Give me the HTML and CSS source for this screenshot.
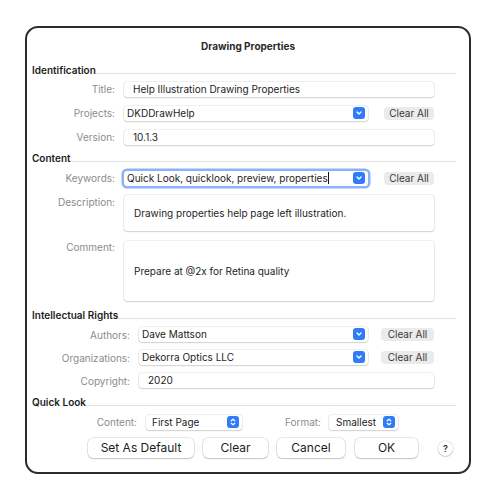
FILE: index.html
```html
<!DOCTYPE html>
<html lang="en">
<head>
  <meta charset="UTF-8">
  <title>Drawing Properties</title>
  <link rel="stylesheet" href="styles.css">
</head>
<body>
  <div class="window">
    <div class="title">Drawing Properties</div>

    <!-- Identification -->
    <div class="group group-ident">
      <div class="group-head"><span>Identification</span></div>
      <div class="row">
        <div class="label">Title:</div>
        <div class="field">Help Illustration Drawing Properties</div>
      </div>
      <div class="row">
        <div class="label">Projects:</div>
        <div class="popup">DKDDrawHelp
          <span class="chev"><svg width="12" height="12" viewBox="0 0 12 12"><path d="M4 5l2 2 2-2" fill="none" stroke="#fff" stroke-width="1.3" stroke-linecap="round" stroke-linejoin="round"/></svg></span>
        </div>
        <div class="clear-all">Clear All</div>
      </div>
      <div class="row">
        <div class="label">Version:</div>
        <div class="field">10.1.3</div>
      </div>
    </div>

    <!-- Content -->
    <div class="group group-content">
      <div class="group-head"><span>Content</span></div>
      <div class="row row-keywords">
        <div class="label">Keywords:</div>
        <div class="popup focused"><span class="caret">Quick Look, quicklook, preview, properties</span>
          <span class="chev"><svg width="12" height="12" viewBox="0 0 12 12"><path d="M4 5l2 2 2-2" fill="none" stroke="#fff" stroke-width="1.3" stroke-linecap="round" stroke-linejoin="round"/></svg></span>
        </div>
        <div class="clear-all">Clear All</div>
      </div>
      <div class="row row-text desc">
        <div class="label">Description:</div>
        <div class="textbox">Drawing properties help page left illustration.</div>
      </div>
      <div class="row row-text comment">
        <div class="label">Comment:</div>
        <div class="textbox">Prepare at @2x for Retina quality</div>
      </div>
    </div>

    <!-- Intellectual Rights -->
    <div class="group group-rights">
      <div class="group-head"><span>Intellectual Rights</span></div>
      <div class="row">
        <div class="label">Authors:</div>
        <div class="popup">Dave Mattson
          <span class="chev"><svg width="12" height="12" viewBox="0 0 12 12"><path d="M4 5l2 2 2-2" fill="none" stroke="#fff" stroke-width="1.3" stroke-linecap="round" stroke-linejoin="round"/></svg></span>
        </div>
        <div class="clear-all">Clear All</div>
      </div>
      <div class="row">
        <div class="label">Organizations:</div>
        <div class="popup">Dekorra Optics LLC
          <span class="chev"><svg width="12" height="12" viewBox="0 0 12 12"><path d="M4 5l2 2 2-2" fill="none" stroke="#fff" stroke-width="1.3" stroke-linecap="round" stroke-linejoin="round"/></svg></span>
        </div>
        <div class="clear-all">Clear All</div>
      </div>
      <div class="row">
        <div class="label">Copyright:</div>
        <div class="field">2020</div>
      </div>
    </div>

    <!-- Quick Look -->
    <div class="group group-quick">
      <div class="group-head"><span>Quick Look</span></div>
      <div class="row">
        <div class="label">Content:</div>
        <div class="popup small first">First Page
          <span class="chev"><svg width="12" height="12" viewBox="0 0 12 12"><path d="M4.2 4.8L6 3.2l1.8 1.6M4.2 7.2L6 8.8l1.8-1.6" fill="none" stroke="#fff" stroke-width="1.2" stroke-linecap="round" stroke-linejoin="round"/></svg></span>
        </div>
        <div class="label format">Format:</div>
        <div class="popup small last">Smallest
          <span class="chev"><svg width="12" height="12" viewBox="0 0 12 12"><path d="M4.2 4.8L6 3.2l1.8 1.6M4.2 7.2L6 8.8l1.8-1.6" fill="none" stroke="#fff" stroke-width="1.2" stroke-linecap="round" stroke-linejoin="round"/></svg></span>
        </div>
      </div>
    </div>

    <div class="buttons">
      <div class="btn btn-default">Set As Default</div>
      <div class="btn btn-clear">Clear</div>
      <div class="btn btn-cancel">Cancel</div>
      <div class="btn btn-ok">OK</div>
      <div class="help">?</div>
    </div>
  </div>
</body>
</html>
```

FILE: styles.css
```css
/* Page */
body {
  margin: 0;
  background: #fff;
  font-family: Inter, "Noto Sans", sans-serif;
  font-size: 10px;
  color: #1f1f1f;
}

/* Dialog window */
.window {
  box-sizing: border-box;
  width: 446px;
  height: 448px;
  margin: 26px 0 0 25px;
  border: 2px solid #2b2b2b;
  border-radius: 13px;
  padding: 0 13px 0 5px;
  background: #fff;
}

.title {
  height: 36px;
  line-height: 37px;
  text-align: center;
  font-weight: 700;
  color: #2a2a2a;
  padding-left: 8px;
}

/* Group headers with the rule after the text */
.group-head {
  display: flex;
  align-items: baseline;
  height: 13px;
  line-height: 13px;
  font-weight: 600;
  color: #1d1d1d;
}

.group-head::after {
  content: "";
  flex: 1;
  border-bottom: 1px solid #e2e2e2;
}

.group-ident .row:first-of-type {
  margin-top: 1px;
}

/* Form rows */
.row {
  display: flex;
  align-items: center;
  height: 24px;
  padding-right: 22px;
}

.label {
  width: 83px;
  margin-right: 9px;
  text-align: right;
  color: #8b8b8b;
  flex-shrink: 0;
}

.field,
.popup,
.textbox {
  box-sizing: border-box;
  background: #fff;
  border-radius: 3px;
  box-shadow: 0 0 0 0.5px rgba(0, 0, 0, 0.13), 0 1px 1.5px rgba(0, 0, 0, 0.13);
  color: #1d1d1d;
}

.field {
  flex: 1;
  height: 15px;
  line-height: 15px;
  padding-left: 9px;
}

.popup {
  position: relative;
  width: 244px;
  height: 15px;
  line-height: 15px;
  padding-left: 3px;
}

.chev {
  position: absolute;
  right: 3px;
  top: 1px;
  width: 12px;
  height: 12px;
  border-radius: 3px;
  background: #2f7cf6;
  display: flex;
}

.clear-all {
  box-sizing: border-box;
  width: 50px;
  height: 13px;
  line-height: 13px;
  margin-left: 16px;
  border-radius: 4px;
  background: #ebebeb;
  text-align: center;
  color: #3a3a3a;
}

/* Content group */
.group-content .group-head {
  margin-top: 3px;
}

.row-keywords {
  height: 26px;
}

.popup.focused {
  box-shadow: 0 0 0 2.5px #8bb1f8, 0 0 0 0.5px rgba(0, 0, 0, 0.2);
}

.caret {
  border-right: 1px solid #111;
}

.row-text {
  align-items: flex-start;
  height: auto;
}

.row-text .label {
  line-height: 12px;
}

.textbox {
  flex: 1;
  display: flex;
  align-items: center;
  padding-left: 10px;
}

.desc {
  margin-top: 4px;
}

.desc .textbox {
  height: 36px;
}

.desc .label {
  padding-top: 1px;
}

.comment {
  margin-top: 10px;
}

.comment .textbox {
  height: 60px;
}

/* Intellectual rights group */
.group-rights .group-head {
  margin-top: 8px;
}

.group-rights .row {
  height: 23px;
}

.group-rights .row:nth-child(2) {
  margin-top: 1px;
}

.group-rights .label {
  width: 98px;
}

.group-rights .popup {
  width: 229px;
}

.group-rights .clear-all {
  width: 53px;
  margin-left: 13px;
}

/* Quick look group */
.group-quick .group-head {
  margin-top: 4px;
}

.group-quick .row {
  height: 26px;
}

.group-quick .label {
  width: 105px;
}

.popup.small {
  padding-left: 6px;
}

.popup.first {
  width: 96px;
}

.popup.last {
  width: 69px;
  padding-left: 7px;
}

.label.format {
  width: 79px;
  margin-right: 8px;
}

/* Bottom buttons */
.buttons {
  display: flex;
  align-items: center;
  gap: 9px;
  height: 22px;
  margin-top: 2px;
  padding-left: 56px;
}

.btn {
  box-sizing: border-box;
  height: 20px;
  line-height: 20px;
  text-align: center;
  font-size: 12px;
  border-radius: 5px;
  background: #fff;
  box-shadow: 0 0 0 0.5px rgba(0, 0, 0, 0.18), 0 1px 1.5px rgba(0, 0, 0, 0.15);
  color: #1d1d1d;
}

.btn-default { width: 106px; }
.btn-clear { width: 65px; }
.btn-cancel { width: 68px; }
.btn-ok { width: 63px; margin-left: 1px; }

.help {
  box-sizing: border-box;
  width: 15px;
  height: 15px;
  line-height: 15px;
  margin-left: 11px;
  border-radius: 50%;
  background: #fff;
  box-shadow: 0 0 0 0.5px rgba(0, 0, 0, 0.15), 0 1px 1.5px rgba(0, 0, 0, 0.15);
  text-align: center;
  font-size: 9px;
  font-weight: 600;
  color: #333;
}
```
